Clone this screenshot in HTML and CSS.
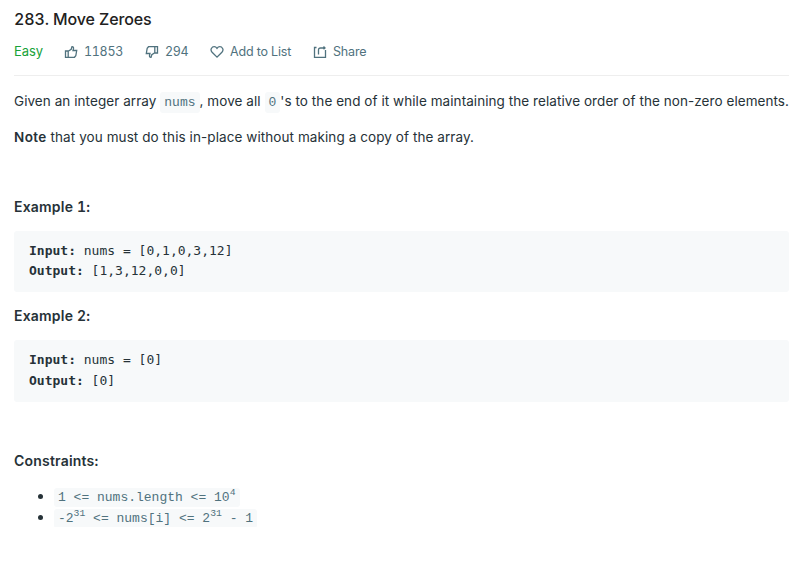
FILE: index.html
```html
<!DOCTYPE html>
<html lang="en">
<head>
<meta charset="utf-8">
<title>Move Zeroes</title>
<link rel="stylesheet" href="styles.css">
</head>
<body>
<main class="problem">
  <header class="header">
    <h1 class="title">283. Move Zeroes</h1>
    <div class="meta">
      <span class="difficulty">Easy</span>
      <button class="action likes"><svg class="icon" viewBox="0 0 14 14"><path d="M1.500 6h2.700v6.300H1.500zM4.200 6.300l3-2 .8-2.600c1.200-.1 1.700.8 1.500 2L9 5.500h3.700l-.9 5.300-1.300 1.500H4.200"/></svg><span>11853</span></button>
      <button class="action dislikes"><svg class="icon" viewBox="0 0 14 14"><path d="M12.500 8H9.800V1.700h2.700zM9.800 7.700l-3 2-.8 2.600c-1.200.1-1.700-.8-1.500-2L5 8.500H1.300l.9-5.300 1.300-1.500h6.300"/></svg><span>294</span></button>
      <button class="action favorite"><svg class="icon" viewBox="0 0 14 14"><path d="M7 12.100 2.100 7.200C-.4 4.500 2 1.700 4.200 1.700 5.700 1.700 6.400 2.500 7 3.400 7.600 2.500 8.300 1.700 9.800 1.700c2.200 0 4.600 2.800 2.100 5.500z"/></svg><span class="words">Add to List</span></button>
      <button class="action share"><svg class="icon" viewBox="0 0 14 14"><path d="M3.500 2.500h-2v9.800h11V5M5.500 9.500V5c0-1.300.7-2 2-2h4.300M10.500 1.500 12 3l-1.500 1.300"/></svg><span class="words">Share</span></button>
    </div>
  </header>
  <section class="content">
    <p class="intro">Given an integer array <code>nums</code>, move all <code>0</code>'s to the end of it while maintaining the relative order of the non-zero elements.</p>
    <p class="note"><strong>Note</strong> that you must do this in-place without making a copy of the array.</p>
    <h2 class="label">Example 1:</h2>
    <pre><b>Input:</b> nums = [0,1,0,3,12]
<b>Output:</b> [1,3,12,0,0]</pre>
    <h2 class="label">Example 2:</h2>
    <pre class="second"><b>Input:</b> nums = [0]
<b>Output:</b> [0]</pre>
    <h2 class="label constraints">Constraints:</h2>
    <ul>
      <li><code>1 &lt;= nums.length &lt;= 10<sup>4</sup></code></li>
      <li><code>-2<sup>31</sup> &lt;= nums[i] &lt;= 2<sup>31</sup> - 1</code></li>
    </ul>
  </section>
</main>
</body>
</html>
```
FILE: styles.css
```css
* { box-sizing: border-box; }
body { margin: 0; background: #fff; color: #263238; font-family: Inter, sans-serif; font-size: 14px; }
.problem { padding: 9px 13px 0 14px; font-variant-numeric: tabular-nums; }
.header { height: 67px; border-bottom: 1px solid #eee; }
.title { margin: 0; font-size: 16px; line-height: 21px; font-weight: 500; letter-spacing: -0.12px; color: #212121; }
.meta { display: flex; align-items: center; margin-top: 12px; height: 20px; font-size: 13px; }
.meta span { position: relative; top: -1px; }
.difficulty { width: 50px; letter-spacing: -0.1px; color: #18a23a; }
.action { display: flex; align-items: center; gap: 6px; padding: 0; border: 0; background: none; color: #50727e; font: 12.5px Inter, sans-serif; font-variant-numeric: tabular-nums; letter-spacing: -0.3px; white-space: nowrap; }
.action .words { letter-spacing: -0.15px; }
.likes { width: 81px; }
.dislikes { width: 65px; }
.favorite { width: 103px; }
.icon { flex: none; width: 14px; height: 14px; fill: none; stroke: #50727e; stroke-width: 1.3; }
.content { padding-top: 15px; }
p { margin: 0 0 15px; font-size: 13.5px; line-height: 21px; letter-spacing: 0.065px; font-variant-numeric: normal; white-space: nowrap; }
.note { margin-bottom: 48px; letter-spacing: 0.08px; }
.label { margin: 0 0 14px; font-size: 14px; line-height: 21px; font-weight: 600; letter-spacing: 0.2px; }
strong { font-weight: 600; letter-spacing: 0.4px; }
code { padding: 2px 4px; border-radius: 3px; background: #f7f9fa; color: #50727e; font: 13px "Liberation Mono", monospace; letter-spacing: 0; }
p code { padding: 3px 4px; }
pre { height: 61px; margin: 0 0 13px; padding: 10px 15px; border-radius: 3px; background: #f7f9fa; font: 13px/20px "DejaVu Sans Mono", monospace; }
.second { height: 62px; margin-bottom: 48px; padding-top: 9px; line-height: 21px; }
ul { margin: 0; padding-left: 40px; }
li { line-height: 21px; }
sup { position: relative; top: -6px; font-size: 9.75px; line-height: 0; vertical-align: baseline; }
```
